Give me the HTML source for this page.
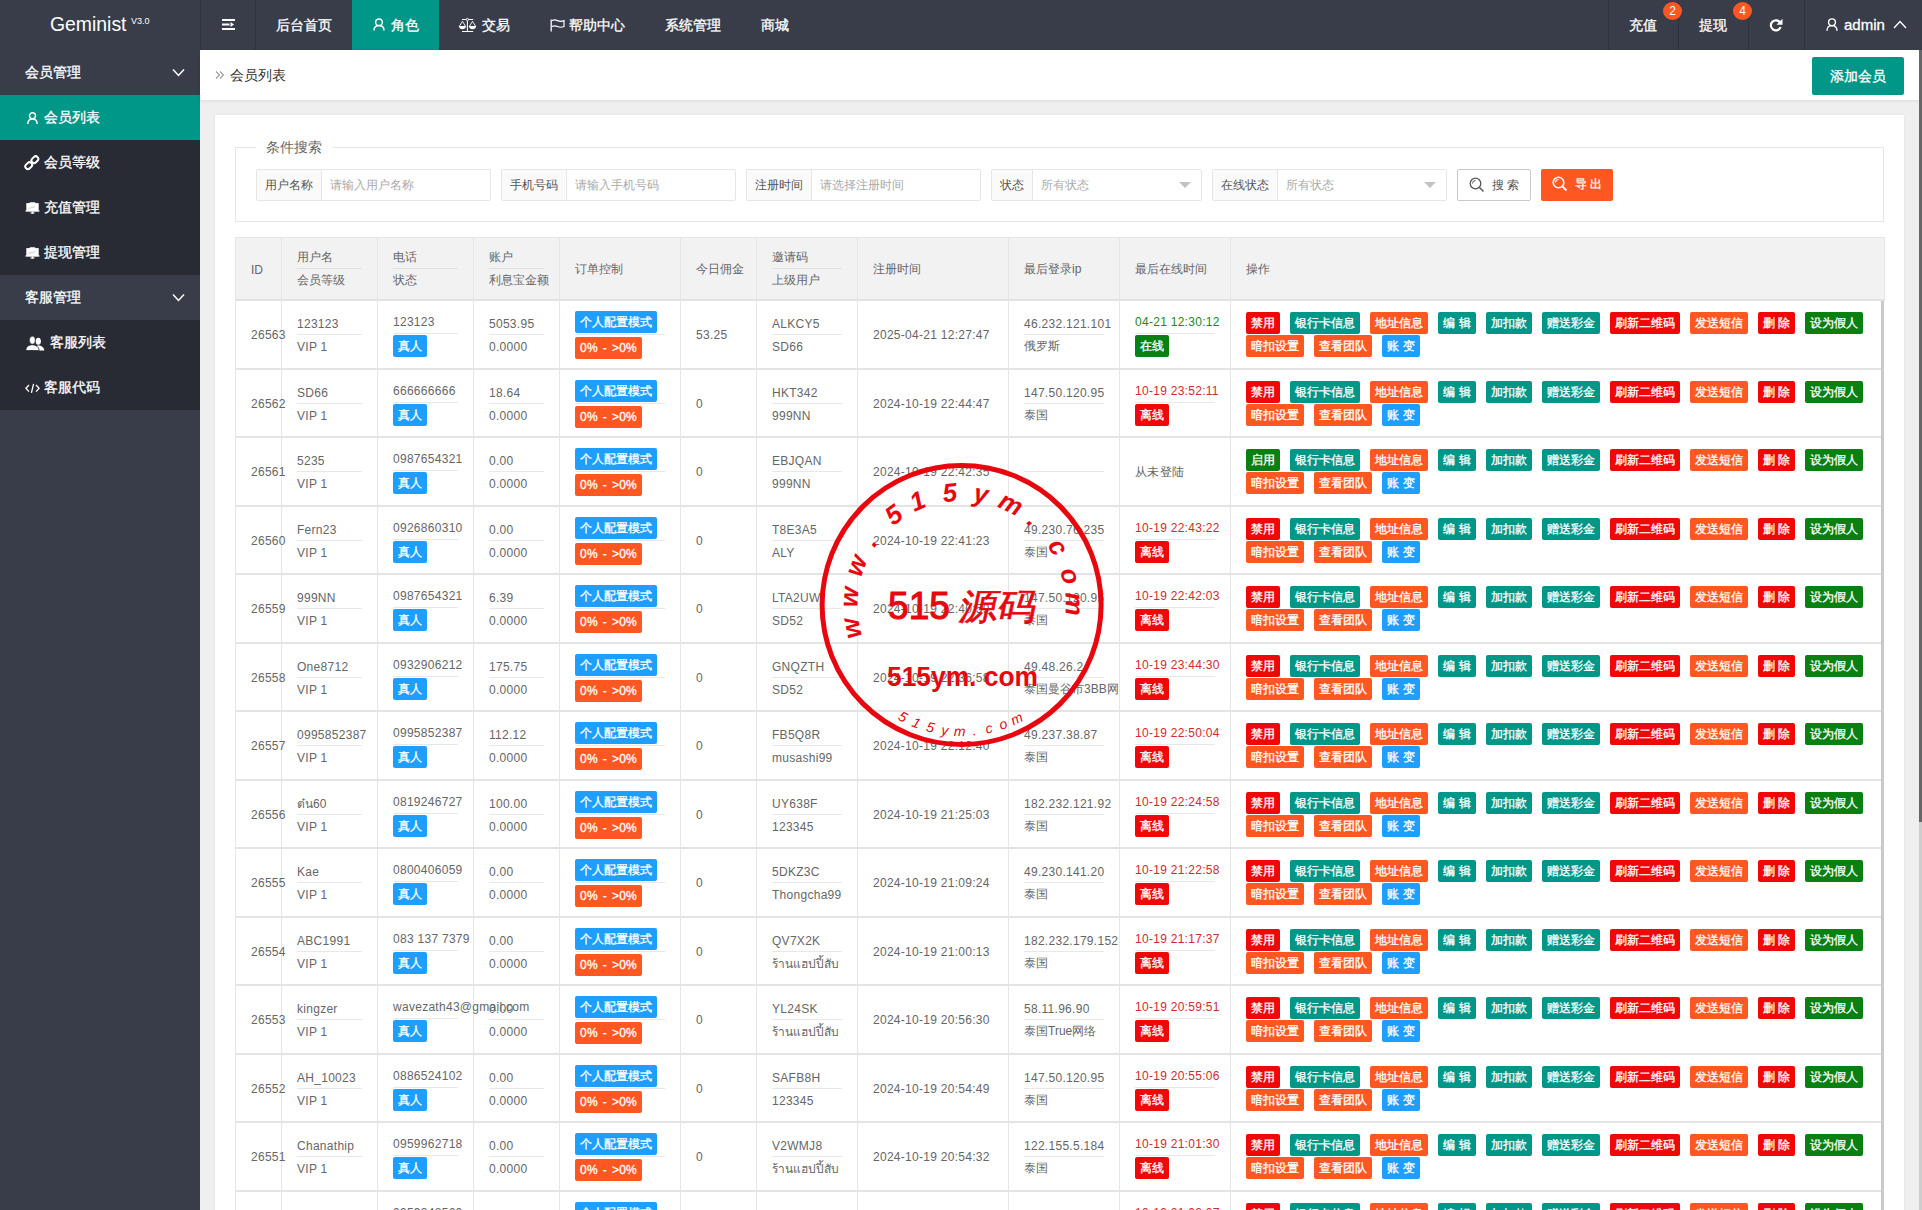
<!DOCTYPE html>
<html><head><meta charset="utf-8"><title>会员列表</title>
<style>
*{box-sizing:border-box;margin:0;padding:0}
html,body{width:1922px;height:1210px;overflow:hidden}
body{position:relative;background:#efefef;font-family:"Liberation Sans",sans-serif;color:#666;font-size:12px}
.abs{position:absolute}
#hdr{position:absolute;left:0;top:0;width:1922px;height:50px;background:#393d49;color:#fff;font-size:14px}
#logo{position:absolute;left:0;top:0;width:200px;height:50px}
#logo .t{position:absolute;left:50px;top:11px;font-size:19.4px;line-height:26px;color:#fff}
#logo .v{position:absolute;left:131px;top:15.5px;font-size:9px;line-height:10px;color:#fff}
.nv{position:absolute;top:0;height:50px;line-height:50px;color:#fff;white-space:nowrap;-webkit-text-stroke:.3px #fff}
.sep{position:absolute;top:0;width:1px;height:50px;background:#30333d}
.badge{position:absolute;width:19px;height:18px;border-radius:50%;background:#ff5722;color:#fff;font-size:12px;line-height:19px;text-align:center}
#side{position:absolute;left:0;top:50px;width:200px;height:1160px;background:#393d49}
.mi{position:absolute;left:0;width:200px;height:45px;line-height:45px;color:#fff;font-size:14px;white-space:nowrap}
.mi.grp{background:#393d49}
.mi.sub{background:#282b33}
.mi.act{background:#009688}
.mi .tx{position:absolute;top:0;-webkit-text-stroke:.3px #fff}
.mi svg{position:absolute}
#crumb{position:absolute;left:200px;top:50px;width:1719px;height:50px;background:#fff;box-shadow:0 1px 3px rgba(0,0,0,.08)}
#sb{position:absolute;left:1919px;top:50px;width:3px;height:1160px;background:#cdcdcd}
#sbt{position:absolute;left:1919px;top:50px;width:3px;height:772px;background:#666}
#card{position:absolute;left:215px;top:115px;width:1689px;height:1100px;background:#fff;box-shadow:0 0 3px rgba(0,0,0,.06)}
#fs{position:absolute;left:235px;top:147px;width:1649px;height:75px;border:1px solid #e6e6e6}
#legend{position:absolute;left:256px;top:138px;width:76px;height:18px;background:#fff;font-size:14px;line-height:18px;color:#666;text-align:center}
.ig{position:absolute;top:169px;height:32px;border:1px solid #e6e6e6;border-radius:2px;background:#fff}
.ig .lb{position:absolute;left:0;top:0;height:30px;line-height:30px;background:#fafafa;border-right:1px solid #e6e6e6;color:#555;text-align:center;font-size:12px}
.ig .ph{position:absolute;top:0;height:30px;line-height:30px;color:#aaa;font-size:12px;white-space:nowrap}
.tri{position:absolute;top:12px;width:0;height:0;border-left:6px solid transparent;border-right:6px solid transparent;border-top:6px solid #c2c2c2}
#tbl-h{position:absolute;left:235px;top:237px;width:1650px;height:64px;background:#f2f2f2;border:1px solid #e6e6e6;border-bottom:2px solid #e2e2e2}
.vl{position:absolute;top:237px;width:1px;height:973px;background:#e6e6e6}
.hc{position:absolute;font-size:12px;color:#666;white-space:nowrap}
.hc2{position:absolute;top:246px;font-size:12px;color:#666;white-space:nowrap}
.hc2 .l1{height:23px;line-height:22px;border-bottom:1px solid #e2e2e2}
.hc2 .l2{height:22px;line-height:23px}
.row{position:absolute;left:236px;width:1645px;height:68.5px;border-bottom:2px solid #e4e4e4}
.row > div{position:absolute;white-space:nowrap}
.c1{top:1px;height:66.5px;line-height:66.5px;font-size:12px;letter-spacing:.28px}
.tt{top:11px}
.tt .l1,.tb .l1{height:23px;line-height:22px;border-bottom:1px solid #e8e8e8;letter-spacing:.28px}
.n{position:relative;top:1px}
.tt .l2{height:23px;line-height:23px;letter-spacing:.28px}
.tt .l2.cj{letter-spacing:0}
.tb{top:10px}
.tb .l2{height:25px;padding-top:1px}
.bb{top:10px}
.bb .l1{height:24px;border-bottom:1px solid #e8e8e8}
.bb .l2{height:24px;padding-top:2px}
.bd{display:inline-block;height:22px;line-height:22px;color:#fff;font-size:12px;text-align:center;border-radius:2px;-webkit-text-stroke:.3px #fff}
.clip{overflow:hidden;width:95px}
.ops{left:1010px;top:11px;width:640px;height:46px}
.bt{position:absolute;height:22px;line-height:22px;color:#fff;font-size:12px;text-align:center;border-radius:2px;white-space:nowrap;-webkit-text-stroke:.3px #fff}
#tbl-r{position:absolute;left:1881px;top:301px;width:3px;height:909px;background:#c9c9c9}
</style></head><body>
<div id="hdr">
 <div id="logo"><span class="t">Geminist</span><span class="v">V3.0</span></div>
 <div class="sep" style="left:200px"></div>
 <div class="sep" style="left:255px"></div>
 <svg class="abs" style="left:222px;top:19px" width="13" height="12" viewBox="0 0 13 12"><rect x="0" y="0" width="13" height="2" fill="#fff"/><rect x="0" y="4.5" width="7.5" height="2" fill="#fff"/><path d="M8.5 3 L12 5.5 L8.5 8 Z" fill="#fff"/><rect x="0" y="9" width="13" height="2" fill="#fff"/></svg>
 <div class="nv" style="left:256px;width:96px;text-align:center">后台首页</div>
 <div class="nv" style="left:352px;width:87px;background:#009688"></div>
 <svg class="abs" style="left:373px;top:18px" width="12" height="13" viewBox="0 0 12 13"><circle cx="6" cy="4.3" r="3.4" fill="none" stroke="#fff" stroke-width="1.5"/><path d="M1 12.6 C1 9 3 7.6 6 7.6 C9 7.6 11 9 11 12.6" fill="none" stroke="#fff" stroke-width="1.5"/></svg>
 <div class="nv" style="left:391px">角色</div>
 <svg class="abs" style="left:456px;top:15px" width="24" height="20" viewBox="0 0 24 20"><path d="M6 4.5 H17.2 M11.4 5.5 V16.5 M6 16.5 H17.2" stroke="#fff" stroke-width="1.05" fill="none"/><circle cx="11.4" cy="4.5" r="1.15" fill="#393d49" stroke="#fff" stroke-width="0.9"/><path d="M6.45 6.3 L3.3 11.4 M6.45 6.3 L9.6 11.4 M16.5 6.3 L13.35 11.4 M16.5 6.3 L19.65 11.4" stroke="#fff" stroke-width="0.9" fill="none"/><path d="M3 11.1 H9.9 A3.45 3.1 0 0 1 3 11.1 Z M13 11.1 H20.1 A3.55 3.1 0 0 1 13 11.1 Z" fill="#fff"/></svg>
 <div class="nv" style="left:482px">交易</div>
 <svg class="abs" style="left:550px;top:19px" width="15" height="13" viewBox="0 0 15 13"><path d="M1.2 0.5 V12.5" stroke="#fff" stroke-width="1.3"/><path d="M2 1.5 Q4.5 0.2 7.5 1.6 Q10.5 3 14 1.6 V7.5 Q10.5 9 7.5 7.5 Q4.5 6.2 2 7.5" stroke="#fff" stroke-width="1.2" fill="none"/></svg>
 <div class="nv" style="left:569px">帮助中心</div>
 <div class="nv" style="left:665px">系统管理</div>
 <div class="nv" style="left:761px">商城</div>
 <div class="sep" style="left:1608px"></div>
 <div class="sep" style="left:1678px"></div>
 <div class="sep" style="left:1748px"></div>
 <div class="sep" style="left:1804px"></div>
 <div class="nv" style="left:1629px">充值</div>
 <div class="badge" style="left:1663px;top:2px">2</div>
 <div class="nv" style="left:1699px">提现</div>
 <div class="badge" style="left:1733px;top:2px">4</div>
 <svg class="abs" style="left:1769px;top:18px" width="14" height="14" viewBox="0 0 14 14"><path d="M11.3 5 A5 5 0 1 0 11.6 9" stroke="#fff" stroke-width="2.2" fill="none"/><path d="M13.5 0.8 V6.8 H7.5 Z" fill="#fff"/></svg>
 <svg class="abs" style="left:1826px;top:18px" width="12" height="13" viewBox="0 0 12 13"><circle cx="6" cy="4.3" r="3.4" fill="none" stroke="#fff" stroke-width="1.4"/><path d="M1 12.8 C1 9 3 7.6 6 7.6 C9 7.6 11 9 11 12.8" fill="none" stroke="#fff" stroke-width="1.4"/></svg>
 <div class="nv" style="left:1844px;font-size:15px">admin</div>
 <svg class="abs" style="left:1893px;top:20px" width="14" height="9" viewBox="0 0 14 9"><path d="M1 8 L7 1.5 L13 8" stroke="#fff" stroke-width="1.4" fill="none"/></svg>
</div>
<div id="side">
 <div class="mi grp" style="top:0"><span class="tx" style="left:25px">会员管理</span><svg style="left:172px;top:18px" width="13" height="9" viewBox="0 0 13 9"><path d="M1 1.5 L6.5 7.5 L12 1.5" stroke="#fff" stroke-width="1.5" fill="none"/></svg></div>
 <div class="mi act" style="top:45px"><svg style="left:27px;top:17px" width="11" height="12" viewBox="0 0 11 12"><circle cx="5.5" cy="3.8" r="3" fill="none" stroke="#fff" stroke-width="1.4"/><path d="M0.8 12 C0.8 8.5 2.8 7 5.5 7 C8.2 7 10.2 8.5 10.2 12" fill="none" stroke="#fff" stroke-width="1.4"/></svg><span class="tx" style="left:44px">会员列表</span></div>
 <div class="mi sub" style="top:90px"><svg style="left:24px;top:15px" width="17" height="17" viewBox="0 0 17 17"><g fill="none" stroke="#fff" stroke-width="2"><rect x="-3.7" y="-2.6" width="7.4" height="5.2" rx="2.6" transform="translate(10.9 4.7) rotate(-45)"/><rect x="-3.7" y="-2.6" width="7.4" height="5.2" rx="2.6" transform="translate(4.7 10.7) rotate(-45)"/></g></svg><span class="tx" style="left:44px">会员等级</span></div>
 <div class="mi sub" style="top:135px"><svg style="left:24.5px;top:16.5px" width="15" height="13" viewBox="0 0 15 13"><rect x="4.6" y="0.3" width="5.8" height="1.6" rx="0.7" fill="#fff"/><rect x="1.3" y="1.1" width="12.4" height="8.3" fill="#fff"/><rect x="0.25" y="8.4" width="14.5" height="1.1" rx="0.4" fill="#fff"/><rect x="6.9" y="9.4" width="1.2" height="1.8" fill="#fff"/><ellipse cx="7.5" cy="11.1" rx="2.3" ry="0.75" fill="#fff"/><path d="M3.3 6.3 L5.5 6 L7 5.1 L8.5 5.5 L10.3 3.8" stroke="#9a9a9a" stroke-width="0.5" fill="none"/></svg><span class="tx" style="left:44px">充值管理</span></div>
 <div class="mi sub" style="top:180px"><svg style="left:24.5px;top:16.5px" width="15" height="13" viewBox="0 0 15 13"><rect x="4.6" y="0.3" width="5.8" height="1.6" rx="0.7" fill="#fff"/><rect x="1.3" y="1.1" width="12.4" height="8.3" fill="#fff"/><rect x="0.25" y="8.4" width="14.5" height="1.1" rx="0.4" fill="#fff"/><rect x="6.9" y="9.4" width="1.2" height="1.8" fill="#fff"/><ellipse cx="7.5" cy="11.1" rx="2.3" ry="0.75" fill="#fff"/><path d="M3.3 6.3 L5.5 6 L7 5.1 L8.5 5.5 L10.3 3.8" stroke="#9a9a9a" stroke-width="0.5" fill="none"/></svg><span class="tx" style="left:44px">提现管理</span></div>
 <div class="mi grp" style="top:225px"><span class="tx" style="left:25px">客服管理</span><svg style="left:172px;top:18px" width="13" height="9" viewBox="0 0 13 9"><path d="M1 1.5 L6.5 7.5 L12 1.5" stroke="#fff" stroke-width="1.5" fill="none"/></svg></div>
 <div class="mi sub" style="top:270px"><svg style="left:25px;top:15.5px" width="20" height="15" viewBox="0 0 20 15"><ellipse cx="13.3" cy="5.3" rx="2.6" ry="3.5" fill="#fff"/><path d="M9.5 14.5 C9.8 10.6 11.5 9.6 13.5 9.4 C16 9.6 19 10.8 19.3 14.5 Z" fill="#fff"/><path d="M0.8 14.5 C1 10.6 3.5 9.1 7.4 8.7 C11 9.1 13.9 10.6 14.3 14.5 Z" fill="#fff" stroke="#282b33" stroke-width="0.8"/><ellipse cx="7.4" cy="4.2" rx="2.9" ry="3.9" fill="#fff" stroke="#282b33" stroke-width="0.6"/></svg><span class="tx" style="left:50px">客服列表</span></div>
 <div class="mi sub" style="top:315px"><svg style="left:24.5px;top:17.5px" width="15" height="11" viewBox="0 0 15 11"><path d="M4 2 L0.9 5.3 L4 8.6 M11 2 L14.1 5.3 L11 8.6 M8.6 0.8 L6.4 9.8" stroke="#fff" stroke-width="1.3" fill="none"/></svg><span class="tx" style="left:44px">客服代码</span></div>
</div>
<div id="crumb">
 <svg class="abs" style="left:15px;top:20px" width="10" height="10" viewBox="0 0 10 10"><path d="M1 1.5 L4.5 5 L1 8.5 M5 1.5 L8.5 5 L5 8.5" stroke="#999" stroke-width="1.1" fill="none"/></svg>
 <span class="abs" style="left:30px;top:0;line-height:50px;font-size:14px;color:#333">会员列表</span>
 <div class="abs" style="left:1612px;top:7px;width:92px;height:38px;background:#009688;border-radius:2px;color:#fff;font-size:14px;line-height:38px;text-align:center;-webkit-text-stroke:.3px #fff">添加会员</div>
</div>
<div id="sb"></div><div id="sbt"></div>
<div id="card"></div>
<div id="fs"></div>
<div id="legend">条件搜索</div>
<div class="ig" style="left:256px;width:235px"><div class="lb" style="width:65px">用户名称</div><div class="ph" style="left:73px">请输入用户名称</div></div>
<div class="ig" style="left:501px;width:235px"><div class="lb" style="width:65px">手机号码</div><div class="ph" style="left:73px">请输入手机号码</div></div>
<div class="ig" style="left:746px;width:235px"><div class="lb" style="width:65px">注册时间</div><div class="ph" style="left:73px">请选择注册时间</div></div>
<div class="ig" style="left:991px;width:211px"><div class="lb" style="width:41px">状态</div><div class="ph" style="left:49px">所有状态</div><div class="tri" style="left:187px"></div></div>
<div class="ig" style="left:1212px;width:235px"><div class="lb" style="width:65px">在线状态</div><div class="ph" style="left:73px">所有状态</div><div class="tri" style="left:211px"></div></div>
<div class="abs" style="left:1457px;top:169px;width:74px;height:32px;border:1px solid #c9c9c9;border-radius:2px;background:#fff;color:#555;font-size:12px;line-height:30px">
 <svg class="abs" style="left:11px;top:7px" width="16" height="16" viewBox="0 0 16 16"><circle cx="6.5" cy="6.5" r="5.3" stroke="#555" stroke-width="1.3" fill="none"/><path d="M10.5 10.5 L14.5 14.5" stroke="#555" stroke-width="1.5"/><path d="M3.5 6.5 A3 3 0 0 1 6.5 3.5" stroke="#555" stroke-width="1" fill="none"/></svg>
 <span class="abs" style="left:34px;top:0;letter-spacing:3px">搜索</span></div>
<div class="abs" style="left:1541px;top:169px;width:72px;height:32px;background:#ff5722;border-radius:2px;color:#fff;font-size:12px;line-height:31px;-webkit-text-stroke:.3px #fff">
 <svg class="abs" style="left:11px;top:7px" width="16" height="16" viewBox="0 0 16 16"><circle cx="6.5" cy="6.5" r="5.3" stroke="#fff" stroke-width="1.6" fill="none"/><path d="M10.5 10.5 L14.5 14.5" stroke="#fff" stroke-width="1.8"/><path d="M3.5 6.5 A3 3 0 0 1 6.5 3.5" stroke="#fff" stroke-width="1.2" fill="none"/></svg>
 <span class="abs" style="left:34px;top:0;letter-spacing:3px">导出</span></div>
<div id="tbl-h"></div>
<div class="vl" style="left:235px"></div><div class="vl" style="left:281px"></div><div class="vl" style="left:377px"></div><div class="vl" style="left:473px"></div><div class="vl" style="left:559px"></div><div class="vl" style="left:680px"></div><div class="vl" style="left:756px"></div><div class="vl" style="left:857px"></div><div class="vl" style="left:1008px"></div><div class="vl" style="left:1119px"></div><div class="vl" style="left:1230px"></div>
<div class="hc" style="left:251px;top:238px;line-height:64px">ID</div>
<div class="hc2" style="left:297px;width:65px"><div class="l1">用户名</div><div class="l2">会员等级</div></div>
<div class="hc2" style="left:393px;width:65px"><div class="l1">电话</div><div class="l2">状态</div></div>
<div class="hc2" style="left:489px;width:55px"><div class="l1">账户</div><div class="l2">利息宝金额</div></div>
<div class="hc" style="left:575px;top:237px;line-height:64px">订单控制</div>
<div class="hc" style="left:696px;top:237px;line-height:64px">今日佣金</div>
<div class="hc2" style="left:772px;width:70px"><div class="l1">邀请码</div><div class="l2">上级用户</div></div>
<div class="hc" style="left:873px;top:237px;line-height:64px">注册时间</div>
<div class="hc" style="left:1024px;top:237px;line-height:64px">最后登录ip</div>
<div class="hc" style="left:1135px;top:237px;line-height:64px">最后在线时间</div>
<div class="hc" style="left:1246px;top:237px;line-height:64px">操作</div>
<div class="row" style="top:301.0px"><div class="c1" style="left:15px">26563</div><div class="tt" style="left:61px;width:65px"><div class="l1"><span class="n">123123</span></div><div class="l2"><span class="n">VIP 1</span></div></div><div class="tb" style="left:157px;width:65px"><div class="l1">123123</div><div class="l2"><span class="bd" style="background:#1e9fff;width:34px">真人</span></div></div><div class="tt" style="left:253px;width:55px"><div class="l1"><span class="n">5053.95</span></div><div class="l2"><span class="n">0.0000</span></div></div><div class="bb" style="left:339px;width:90px"><div class="l1"><span class="bd" style="background:#1e9fff;width:82px">个人配置模式</span></div><div class="l2"><span class="bd" style="background:#ff5722;width:67px;word-spacing:1.5px;letter-spacing:.2px">0% - &gt;0%</span></div></div><div class="c1" style="left:460px">53.25</div><div class="tt" style="left:536px;width:70px"><div class="l1"><span class="n">ALKCY5</span></div><div class="l2"><span class="n">SD66</span></div></div><div class="c1" style="left:637px">2025-04-21 12:27:47</div><div class="tt" style="left:788px;width:80px"><div class="l1"><span class="n">46.232.121.101</span></div><div class="l2 clip cj">俄罗斯</div></div><div class="tb" style="left:899px;width:80px"><div class="l1" style="color:#1a8a1a">04-21 12:30:12</div><div class="l2"><span class="bd" style="background:#0a7f12;width:34px">在线</span></div></div><div class="ops"><span class="bt" style="left:0px;top:0;width:34px;background:#f00808">禁用</span><span class="bt" style="left:44px;top:0;width:70px;background:#009688">银行卡信息</span><span class="bt" style="left:124px;top:0;width:58px;background:#ff5722">地址信息</span><span class="bt" style="left:192px;top:0;width:38px;background:#009688">编 辑</span><span class="bt" style="left:240px;top:0;width:46px;background:#009688">加扣款</span><span class="bt" style="left:296px;top:0;width:58px;background:#009688">赠送彩金</span><span class="bt" style="left:364px;top:0;width:70px;background:#f00808">刷新二维码</span><span class="bt" style="left:444px;top:0;width:58px;background:#ff5722">发送短信</span><span class="bt" style="left:512px;top:0;width:37px;background:#f00808">删 除</span><span class="bt" style="left:559px;top:0;width:58px;background:#0a7f12">设为假人</span><span class="bt" style="left:0px;top:23px;width:58px;background:#ff5722">暗扣设置</span><span class="bt" style="left:68px;top:23px;width:58px;background:#ff5722">查看团队</span><span class="bt" style="left:136px;top:23px;width:38px;background:#1e9fff">账 变</span></div></div><div class="row" style="top:369.5px"><div class="c1" style="left:15px">26562</div><div class="tt" style="left:61px;width:65px"><div class="l1"><span class="n">SD66</span></div><div class="l2"><span class="n">VIP 1</span></div></div><div class="tb" style="left:157px;width:65px"><div class="l1">666666666</div><div class="l2"><span class="bd" style="background:#1e9fff;width:34px">真人</span></div></div><div class="tt" style="left:253px;width:55px"><div class="l1"><span class="n">18.64</span></div><div class="l2"><span class="n">0.0000</span></div></div><div class="bb" style="left:339px;width:90px"><div class="l1"><span class="bd" style="background:#1e9fff;width:82px">个人配置模式</span></div><div class="l2"><span class="bd" style="background:#ff5722;width:67px;word-spacing:1.5px;letter-spacing:.2px">0% - &gt;0%</span></div></div><div class="c1" style="left:460px">0</div><div class="tt" style="left:536px;width:70px"><div class="l1"><span class="n">HKT342</span></div><div class="l2"><span class="n">999NN</span></div></div><div class="c1" style="left:637px">2024-10-19 22:44:47</div><div class="tt" style="left:788px;width:80px"><div class="l1"><span class="n">147.50.120.95</span></div><div class="l2 clip cj">泰国</div></div><div class="tb" style="left:899px;width:80px"><div class="l1" style="color:#d42a2a">10-19 23:52:11</div><div class="l2"><span class="bd" style="background:#f00808;width:34px">离线</span></div></div><div class="ops"><span class="bt" style="left:0px;top:0;width:34px;background:#f00808">禁用</span><span class="bt" style="left:44px;top:0;width:70px;background:#009688">银行卡信息</span><span class="bt" style="left:124px;top:0;width:58px;background:#ff5722">地址信息</span><span class="bt" style="left:192px;top:0;width:38px;background:#009688">编 辑</span><span class="bt" style="left:240px;top:0;width:46px;background:#009688">加扣款</span><span class="bt" style="left:296px;top:0;width:58px;background:#009688">赠送彩金</span><span class="bt" style="left:364px;top:0;width:70px;background:#f00808">刷新二维码</span><span class="bt" style="left:444px;top:0;width:58px;background:#ff5722">发送短信</span><span class="bt" style="left:512px;top:0;width:37px;background:#f00808">删 除</span><span class="bt" style="left:559px;top:0;width:58px;background:#0a7f12">设为假人</span><span class="bt" style="left:0px;top:23px;width:58px;background:#ff5722">暗扣设置</span><span class="bt" style="left:68px;top:23px;width:58px;background:#ff5722">查看团队</span><span class="bt" style="left:136px;top:23px;width:38px;background:#1e9fff">账 变</span></div></div><div class="row" style="top:438.0px"><div class="c1" style="left:15px">26561</div><div class="tt" style="left:61px;width:65px"><div class="l1"><span class="n">5235</span></div><div class="l2"><span class="n">VIP 1</span></div></div><div class="tb" style="left:157px;width:65px"><div class="l1">0987654321</div><div class="l2"><span class="bd" style="background:#1e9fff;width:34px">真人</span></div></div><div class="tt" style="left:253px;width:55px"><div class="l1"><span class="n">0.00</span></div><div class="l2"><span class="n">0.0000</span></div></div><div class="bb" style="left:339px;width:90px"><div class="l1"><span class="bd" style="background:#1e9fff;width:82px">个人配置模式</span></div><div class="l2"><span class="bd" style="background:#ff5722;width:67px;word-spacing:1.5px;letter-spacing:.2px">0% - &gt;0%</span></div></div><div class="c1" style="left:460px">0</div><div class="tt" style="left:536px;width:70px"><div class="l1"><span class="n">EBJQAN</span></div><div class="l2"><span class="n">999NN</span></div></div><div class="c1" style="left:637px">2024-10-19 22:42:35</div><div class="tt" style="left:788px;width:80px"><div class="l1"><span class="n"></span></div><div class="l2 clip cj"></div></div><div class="c1" style="left:899px">从未登陆</div><div class="ops"><span class="bt" style="left:0px;top:0;width:34px;background:#0a7f12">启用</span><span class="bt" style="left:44px;top:0;width:70px;background:#009688">银行卡信息</span><span class="bt" style="left:124px;top:0;width:58px;background:#ff5722">地址信息</span><span class="bt" style="left:192px;top:0;width:38px;background:#009688">编 辑</span><span class="bt" style="left:240px;top:0;width:46px;background:#009688">加扣款</span><span class="bt" style="left:296px;top:0;width:58px;background:#009688">赠送彩金</span><span class="bt" style="left:364px;top:0;width:70px;background:#f00808">刷新二维码</span><span class="bt" style="left:444px;top:0;width:58px;background:#ff5722">发送短信</span><span class="bt" style="left:512px;top:0;width:37px;background:#f00808">删 除</span><span class="bt" style="left:559px;top:0;width:58px;background:#0a7f12">设为假人</span><span class="bt" style="left:0px;top:23px;width:58px;background:#ff5722">暗扣设置</span><span class="bt" style="left:68px;top:23px;width:58px;background:#ff5722">查看团队</span><span class="bt" style="left:136px;top:23px;width:38px;background:#1e9fff">账 变</span></div></div><div class="row" style="top:506.5px"><div class="c1" style="left:15px">26560</div><div class="tt" style="left:61px;width:65px"><div class="l1"><span class="n">Fern23</span></div><div class="l2"><span class="n">VIP 1</span></div></div><div class="tb" style="left:157px;width:65px"><div class="l1">0926860310</div><div class="l2"><span class="bd" style="background:#1e9fff;width:34px">真人</span></div></div><div class="tt" style="left:253px;width:55px"><div class="l1"><span class="n">0.00</span></div><div class="l2"><span class="n">0.0000</span></div></div><div class="bb" style="left:339px;width:90px"><div class="l1"><span class="bd" style="background:#1e9fff;width:82px">个人配置模式</span></div><div class="l2"><span class="bd" style="background:#ff5722;width:67px;word-spacing:1.5px;letter-spacing:.2px">0% - &gt;0%</span></div></div><div class="c1" style="left:460px">0</div><div class="tt" style="left:536px;width:70px"><div class="l1"><span class="n">T8E3A5</span></div><div class="l2"><span class="n">ALY</span></div></div><div class="c1" style="left:637px">2024-10-19 22:41:23</div><div class="tt" style="left:788px;width:80px"><div class="l1"><span class="n">49.230.76.235</span></div><div class="l2 clip cj">泰国</div></div><div class="tb" style="left:899px;width:80px"><div class="l1" style="color:#d42a2a">10-19 22:43:22</div><div class="l2"><span class="bd" style="background:#f00808;width:34px">离线</span></div></div><div class="ops"><span class="bt" style="left:0px;top:0;width:34px;background:#f00808">禁用</span><span class="bt" style="left:44px;top:0;width:70px;background:#009688">银行卡信息</span><span class="bt" style="left:124px;top:0;width:58px;background:#ff5722">地址信息</span><span class="bt" style="left:192px;top:0;width:38px;background:#009688">编 辑</span><span class="bt" style="left:240px;top:0;width:46px;background:#009688">加扣款</span><span class="bt" style="left:296px;top:0;width:58px;background:#009688">赠送彩金</span><span class="bt" style="left:364px;top:0;width:70px;background:#f00808">刷新二维码</span><span class="bt" style="left:444px;top:0;width:58px;background:#ff5722">发送短信</span><span class="bt" style="left:512px;top:0;width:37px;background:#f00808">删 除</span><span class="bt" style="left:559px;top:0;width:58px;background:#0a7f12">设为假人</span><span class="bt" style="left:0px;top:23px;width:58px;background:#ff5722">暗扣设置</span><span class="bt" style="left:68px;top:23px;width:58px;background:#ff5722">查看团队</span><span class="bt" style="left:136px;top:23px;width:38px;background:#1e9fff">账 变</span></div></div><div class="row" style="top:575.0px"><div class="c1" style="left:15px">26559</div><div class="tt" style="left:61px;width:65px"><div class="l1"><span class="n">999NN</span></div><div class="l2"><span class="n">VIP 1</span></div></div><div class="tb" style="left:157px;width:65px"><div class="l1">0987654321</div><div class="l2"><span class="bd" style="background:#1e9fff;width:34px">真人</span></div></div><div class="tt" style="left:253px;width:55px"><div class="l1"><span class="n">6.39</span></div><div class="l2"><span class="n">0.0000</span></div></div><div class="bb" style="left:339px;width:90px"><div class="l1"><span class="bd" style="background:#1e9fff;width:82px">个人配置模式</span></div><div class="l2"><span class="bd" style="background:#ff5722;width:67px;word-spacing:1.5px;letter-spacing:.2px">0% - &gt;0%</span></div></div><div class="c1" style="left:460px">0</div><div class="tt" style="left:536px;width:70px"><div class="l1"><span class="n">LTA2UW</span></div><div class="l2"><span class="n">SD52</span></div></div><div class="c1" style="left:637px">2024-10-19 22:40:59</div><div class="tt" style="left:788px;width:80px"><div class="l1"><span class="n">147.50.120.95</span></div><div class="l2 clip cj">泰国</div></div><div class="tb" style="left:899px;width:80px"><div class="l1" style="color:#d42a2a">10-19 22:42:03</div><div class="l2"><span class="bd" style="background:#f00808;width:34px">离线</span></div></div><div class="ops"><span class="bt" style="left:0px;top:0;width:34px;background:#f00808">禁用</span><span class="bt" style="left:44px;top:0;width:70px;background:#009688">银行卡信息</span><span class="bt" style="left:124px;top:0;width:58px;background:#ff5722">地址信息</span><span class="bt" style="left:192px;top:0;width:38px;background:#009688">编 辑</span><span class="bt" style="left:240px;top:0;width:46px;background:#009688">加扣款</span><span class="bt" style="left:296px;top:0;width:58px;background:#009688">赠送彩金</span><span class="bt" style="left:364px;top:0;width:70px;background:#f00808">刷新二维码</span><span class="bt" style="left:444px;top:0;width:58px;background:#ff5722">发送短信</span><span class="bt" style="left:512px;top:0;width:37px;background:#f00808">删 除</span><span class="bt" style="left:559px;top:0;width:58px;background:#0a7f12">设为假人</span><span class="bt" style="left:0px;top:23px;width:58px;background:#ff5722">暗扣设置</span><span class="bt" style="left:68px;top:23px;width:58px;background:#ff5722">查看团队</span><span class="bt" style="left:136px;top:23px;width:38px;background:#1e9fff">账 变</span></div></div><div class="row" style="top:643.5px"><div class="c1" style="left:15px">26558</div><div class="tt" style="left:61px;width:65px"><div class="l1"><span class="n">One8712</span></div><div class="l2"><span class="n">VIP 1</span></div></div><div class="tb" style="left:157px;width:65px"><div class="l1">0932906212</div><div class="l2"><span class="bd" style="background:#1e9fff;width:34px">真人</span></div></div><div class="tt" style="left:253px;width:55px"><div class="l1"><span class="n">175.75</span></div><div class="l2"><span class="n">0.0000</span></div></div><div class="bb" style="left:339px;width:90px"><div class="l1"><span class="bd" style="background:#1e9fff;width:82px">个人配置模式</span></div><div class="l2"><span class="bd" style="background:#ff5722;width:67px;word-spacing:1.5px;letter-spacing:.2px">0% - &gt;0%</span></div></div><div class="c1" style="left:460px">0</div><div class="tt" style="left:536px;width:70px"><div class="l1"><span class="n">GNQZTH</span></div><div class="l2"><span class="n">SD52</span></div></div><div class="c1" style="left:637px">2024-10-19 22:36:58</div><div class="tt" style="left:788px;width:80px"><div class="l1"><span class="n">49.48.26.2</span></div><div class="l2 clip cj">泰国曼谷市3BB网络</div></div><div class="tb" style="left:899px;width:80px"><div class="l1" style="color:#d42a2a">10-19 23:44:30</div><div class="l2"><span class="bd" style="background:#f00808;width:34px">离线</span></div></div><div class="ops"><span class="bt" style="left:0px;top:0;width:34px;background:#f00808">禁用</span><span class="bt" style="left:44px;top:0;width:70px;background:#009688">银行卡信息</span><span class="bt" style="left:124px;top:0;width:58px;background:#ff5722">地址信息</span><span class="bt" style="left:192px;top:0;width:38px;background:#009688">编 辑</span><span class="bt" style="left:240px;top:0;width:46px;background:#009688">加扣款</span><span class="bt" style="left:296px;top:0;width:58px;background:#009688">赠送彩金</span><span class="bt" style="left:364px;top:0;width:70px;background:#f00808">刷新二维码</span><span class="bt" style="left:444px;top:0;width:58px;background:#ff5722">发送短信</span><span class="bt" style="left:512px;top:0;width:37px;background:#f00808">删 除</span><span class="bt" style="left:559px;top:0;width:58px;background:#0a7f12">设为假人</span><span class="bt" style="left:0px;top:23px;width:58px;background:#ff5722">暗扣设置</span><span class="bt" style="left:68px;top:23px;width:58px;background:#ff5722">查看团队</span><span class="bt" style="left:136px;top:23px;width:38px;background:#1e9fff">账 变</span></div></div><div class="row" style="top:712.0px"><div class="c1" style="left:15px">26557</div><div class="tt" style="left:61px;width:65px"><div class="l1"><span class="n">0995852387</span></div><div class="l2"><span class="n">VIP 1</span></div></div><div class="tb" style="left:157px;width:65px"><div class="l1">0995852387</div><div class="l2"><span class="bd" style="background:#1e9fff;width:34px">真人</span></div></div><div class="tt" style="left:253px;width:55px"><div class="l1"><span class="n">112.12</span></div><div class="l2"><span class="n">0.0000</span></div></div><div class="bb" style="left:339px;width:90px"><div class="l1"><span class="bd" style="background:#1e9fff;width:82px">个人配置模式</span></div><div class="l2"><span class="bd" style="background:#ff5722;width:67px;word-spacing:1.5px;letter-spacing:.2px">0% - &gt;0%</span></div></div><div class="c1" style="left:460px">0</div><div class="tt" style="left:536px;width:70px"><div class="l1"><span class="n">FB5Q8R</span></div><div class="l2"><span class="n">musashi99</span></div></div><div class="c1" style="left:637px">2024-10-19 22:12:40</div><div class="tt" style="left:788px;width:80px"><div class="l1"><span class="n">49.237.38.87</span></div><div class="l2 clip cj">泰国</div></div><div class="tb" style="left:899px;width:80px"><div class="l1" style="color:#d42a2a">10-19 22:50:04</div><div class="l2"><span class="bd" style="background:#f00808;width:34px">离线</span></div></div><div class="ops"><span class="bt" style="left:0px;top:0;width:34px;background:#f00808">禁用</span><span class="bt" style="left:44px;top:0;width:70px;background:#009688">银行卡信息</span><span class="bt" style="left:124px;top:0;width:58px;background:#ff5722">地址信息</span><span class="bt" style="left:192px;top:0;width:38px;background:#009688">编 辑</span><span class="bt" style="left:240px;top:0;width:46px;background:#009688">加扣款</span><span class="bt" style="left:296px;top:0;width:58px;background:#009688">赠送彩金</span><span class="bt" style="left:364px;top:0;width:70px;background:#f00808">刷新二维码</span><span class="bt" style="left:444px;top:0;width:58px;background:#ff5722">发送短信</span><span class="bt" style="left:512px;top:0;width:37px;background:#f00808">删 除</span><span class="bt" style="left:559px;top:0;width:58px;background:#0a7f12">设为假人</span><span class="bt" style="left:0px;top:23px;width:58px;background:#ff5722">暗扣设置</span><span class="bt" style="left:68px;top:23px;width:58px;background:#ff5722">查看团队</span><span class="bt" style="left:136px;top:23px;width:38px;background:#1e9fff">账 变</span></div></div><div class="row" style="top:780.5px"><div class="c1" style="left:15px">26556</div><div class="tt" style="left:61px;width:65px"><div class="l1" style="letter-spacing:0"><span class="n">ต๋น60</span></div><div class="l2"><span class="n">VIP 1</span></div></div><div class="tb" style="left:157px;width:65px"><div class="l1">0819246727</div><div class="l2"><span class="bd" style="background:#1e9fff;width:34px">真人</span></div></div><div class="tt" style="left:253px;width:55px"><div class="l1"><span class="n">100.00</span></div><div class="l2"><span class="n">0.0000</span></div></div><div class="bb" style="left:339px;width:90px"><div class="l1"><span class="bd" style="background:#1e9fff;width:82px">个人配置模式</span></div><div class="l2"><span class="bd" style="background:#ff5722;width:67px;word-spacing:1.5px;letter-spacing:.2px">0% - &gt;0%</span></div></div><div class="c1" style="left:460px">0</div><div class="tt" style="left:536px;width:70px"><div class="l1"><span class="n">UY638F</span></div><div class="l2"><span class="n">123345</span></div></div><div class="c1" style="left:637px">2024-10-19 21:25:03</div><div class="tt" style="left:788px;width:80px"><div class="l1"><span class="n">182.232.121.92</span></div><div class="l2 clip cj">泰国</div></div><div class="tb" style="left:899px;width:80px"><div class="l1" style="color:#d42a2a">10-19 22:24:58</div><div class="l2"><span class="bd" style="background:#f00808;width:34px">离线</span></div></div><div class="ops"><span class="bt" style="left:0px;top:0;width:34px;background:#f00808">禁用</span><span class="bt" style="left:44px;top:0;width:70px;background:#009688">银行卡信息</span><span class="bt" style="left:124px;top:0;width:58px;background:#ff5722">地址信息</span><span class="bt" style="left:192px;top:0;width:38px;background:#009688">编 辑</span><span class="bt" style="left:240px;top:0;width:46px;background:#009688">加扣款</span><span class="bt" style="left:296px;top:0;width:58px;background:#009688">赠送彩金</span><span class="bt" style="left:364px;top:0;width:70px;background:#f00808">刷新二维码</span><span class="bt" style="left:444px;top:0;width:58px;background:#ff5722">发送短信</span><span class="bt" style="left:512px;top:0;width:37px;background:#f00808">删 除</span><span class="bt" style="left:559px;top:0;width:58px;background:#0a7f12">设为假人</span><span class="bt" style="left:0px;top:23px;width:58px;background:#ff5722">暗扣设置</span><span class="bt" style="left:68px;top:23px;width:58px;background:#ff5722">查看团队</span><span class="bt" style="left:136px;top:23px;width:38px;background:#1e9fff">账 变</span></div></div><div class="row" style="top:849.0px"><div class="c1" style="left:15px">26555</div><div class="tt" style="left:61px;width:65px"><div class="l1"><span class="n">Kae</span></div><div class="l2"><span class="n">VIP 1</span></div></div><div class="tb" style="left:157px;width:65px"><div class="l1">0800406059</div><div class="l2"><span class="bd" style="background:#1e9fff;width:34px">真人</span></div></div><div class="tt" style="left:253px;width:55px"><div class="l1"><span class="n">0.00</span></div><div class="l2"><span class="n">0.0000</span></div></div><div class="bb" style="left:339px;width:90px"><div class="l1"><span class="bd" style="background:#1e9fff;width:82px">个人配置模式</span></div><div class="l2"><span class="bd" style="background:#ff5722;width:67px;word-spacing:1.5px;letter-spacing:.2px">0% - &gt;0%</span></div></div><div class="c1" style="left:460px">0</div><div class="tt" style="left:536px;width:70px"><div class="l1"><span class="n">5DKZ3C</span></div><div class="l2"><span class="n">Thongcha99</span></div></div><div class="c1" style="left:637px">2024-10-19 21:09:24</div><div class="tt" style="left:788px;width:80px"><div class="l1"><span class="n">49.230.141.20</span></div><div class="l2 clip cj">泰国</div></div><div class="tb" style="left:899px;width:80px"><div class="l1" style="color:#d42a2a">10-19 21:22:58</div><div class="l2"><span class="bd" style="background:#f00808;width:34px">离线</span></div></div><div class="ops"><span class="bt" style="left:0px;top:0;width:34px;background:#f00808">禁用</span><span class="bt" style="left:44px;top:0;width:70px;background:#009688">银行卡信息</span><span class="bt" style="left:124px;top:0;width:58px;background:#ff5722">地址信息</span><span class="bt" style="left:192px;top:0;width:38px;background:#009688">编 辑</span><span class="bt" style="left:240px;top:0;width:46px;background:#009688">加扣款</span><span class="bt" style="left:296px;top:0;width:58px;background:#009688">赠送彩金</span><span class="bt" style="left:364px;top:0;width:70px;background:#f00808">刷新二维码</span><span class="bt" style="left:444px;top:0;width:58px;background:#ff5722">发送短信</span><span class="bt" style="left:512px;top:0;width:37px;background:#f00808">删 除</span><span class="bt" style="left:559px;top:0;width:58px;background:#0a7f12">设为假人</span><span class="bt" style="left:0px;top:23px;width:58px;background:#ff5722">暗扣设置</span><span class="bt" style="left:68px;top:23px;width:58px;background:#ff5722">查看团队</span><span class="bt" style="left:136px;top:23px;width:38px;background:#1e9fff">账 变</span></div></div><div class="row" style="top:917.5px"><div class="c1" style="left:15px">26554</div><div class="tt" style="left:61px;width:65px"><div class="l1"><span class="n">ABC1991</span></div><div class="l2"><span class="n">VIP 1</span></div></div><div class="tb" style="left:157px;width:65px"><div class="l1">083 137 7379</div><div class="l2"><span class="bd" style="background:#1e9fff;width:34px">真人</span></div></div><div class="tt" style="left:253px;width:55px"><div class="l1"><span class="n">0.00</span></div><div class="l2"><span class="n">0.0000</span></div></div><div class="bb" style="left:339px;width:90px"><div class="l1"><span class="bd" style="background:#1e9fff;width:82px">个人配置模式</span></div><div class="l2"><span class="bd" style="background:#ff5722;width:67px;word-spacing:1.5px;letter-spacing:.2px">0% - &gt;0%</span></div></div><div class="c1" style="left:460px">0</div><div class="tt" style="left:536px;width:70px"><div class="l1"><span class="n">QV7X2K</span></div><div class="l2 cj"><span class="n">ร้านแฮปปี้สับ</span></div></div><div class="c1" style="left:637px">2024-10-19 21:00:13</div><div class="tt" style="left:788px;width:80px"><div class="l1"><span class="n">182.232.179.152</span></div><div class="l2 clip cj">泰国</div></div><div class="tb" style="left:899px;width:80px"><div class="l1" style="color:#d42a2a">10-19 21:17:37</div><div class="l2"><span class="bd" style="background:#f00808;width:34px">离线</span></div></div><div class="ops"><span class="bt" style="left:0px;top:0;width:34px;background:#f00808">禁用</span><span class="bt" style="left:44px;top:0;width:70px;background:#009688">银行卡信息</span><span class="bt" style="left:124px;top:0;width:58px;background:#ff5722">地址信息</span><span class="bt" style="left:192px;top:0;width:38px;background:#009688">编 辑</span><span class="bt" style="left:240px;top:0;width:46px;background:#009688">加扣款</span><span class="bt" style="left:296px;top:0;width:58px;background:#009688">赠送彩金</span><span class="bt" style="left:364px;top:0;width:70px;background:#f00808">刷新二维码</span><span class="bt" style="left:444px;top:0;width:58px;background:#ff5722">发送短信</span><span class="bt" style="left:512px;top:0;width:37px;background:#f00808">删 除</span><span class="bt" style="left:559px;top:0;width:58px;background:#0a7f12">设为假人</span><span class="bt" style="left:0px;top:23px;width:58px;background:#ff5722">暗扣设置</span><span class="bt" style="left:68px;top:23px;width:58px;background:#ff5722">查看团队</span><span class="bt" style="left:136px;top:23px;width:38px;background:#1e9fff">账 变</span></div></div><div class="row" style="top:986.0px"><div class="c1" style="left:15px">26553</div><div class="tt" style="left:61px;width:65px"><div class="l1"><span class="n">kingzer</span></div><div class="l2"><span class="n">VIP 1</span></div></div><div class="tb" style="left:157px;width:65px"><div class="l1">wavezath43@gmail.com</div><div class="l2"><span class="bd" style="background:#1e9fff;width:34px">真人</span></div></div><div class="tt" style="left:253px;width:55px"><div class="l1"><span class="n">0.00</span></div><div class="l2"><span class="n">0.0000</span></div></div><div class="bb" style="left:339px;width:90px"><div class="l1"><span class="bd" style="background:#1e9fff;width:82px">个人配置模式</span></div><div class="l2"><span class="bd" style="background:#ff5722;width:67px;word-spacing:1.5px;letter-spacing:.2px">0% - &gt;0%</span></div></div><div class="c1" style="left:460px">0</div><div class="tt" style="left:536px;width:70px"><div class="l1"><span class="n">YL24SK</span></div><div class="l2 cj"><span class="n">ร้านแฮปปี้สับ</span></div></div><div class="c1" style="left:637px">2024-10-19 20:56:30</div><div class="tt" style="left:788px;width:80px"><div class="l1"><span class="n">58.11.96.90</span></div><div class="l2 clip cj">泰国True网络</div></div><div class="tb" style="left:899px;width:80px"><div class="l1" style="color:#d42a2a">10-19 20:59:51</div><div class="l2"><span class="bd" style="background:#f00808;width:34px">离线</span></div></div><div class="ops"><span class="bt" style="left:0px;top:0;width:34px;background:#f00808">禁用</span><span class="bt" style="left:44px;top:0;width:70px;background:#009688">银行卡信息</span><span class="bt" style="left:124px;top:0;width:58px;background:#ff5722">地址信息</span><span class="bt" style="left:192px;top:0;width:38px;background:#009688">编 辑</span><span class="bt" style="left:240px;top:0;width:46px;background:#009688">加扣款</span><span class="bt" style="left:296px;top:0;width:58px;background:#009688">赠送彩金</span><span class="bt" style="left:364px;top:0;width:70px;background:#f00808">刷新二维码</span><span class="bt" style="left:444px;top:0;width:58px;background:#ff5722">发送短信</span><span class="bt" style="left:512px;top:0;width:37px;background:#f00808">删 除</span><span class="bt" style="left:559px;top:0;width:58px;background:#0a7f12">设为假人</span><span class="bt" style="left:0px;top:23px;width:58px;background:#ff5722">暗扣设置</span><span class="bt" style="left:68px;top:23px;width:58px;background:#ff5722">查看团队</span><span class="bt" style="left:136px;top:23px;width:38px;background:#1e9fff">账 变</span></div></div><div class="row" style="top:1054.5px"><div class="c1" style="left:15px">26552</div><div class="tt" style="left:61px;width:65px"><div class="l1"><span class="n">AH_10023</span></div><div class="l2"><span class="n">VIP 1</span></div></div><div class="tb" style="left:157px;width:65px"><div class="l1">0886524102</div><div class="l2"><span class="bd" style="background:#1e9fff;width:34px">真人</span></div></div><div class="tt" style="left:253px;width:55px"><div class="l1"><span class="n">0.00</span></div><div class="l2"><span class="n">0.0000</span></div></div><div class="bb" style="left:339px;width:90px"><div class="l1"><span class="bd" style="background:#1e9fff;width:82px">个人配置模式</span></div><div class="l2"><span class="bd" style="background:#ff5722;width:67px;word-spacing:1.5px;letter-spacing:.2px">0% - &gt;0%</span></div></div><div class="c1" style="left:460px">0</div><div class="tt" style="left:536px;width:70px"><div class="l1"><span class="n">SAFB8H</span></div><div class="l2"><span class="n">123345</span></div></div><div class="c1" style="left:637px">2024-10-19 20:54:49</div><div class="tt" style="left:788px;width:80px"><div class="l1"><span class="n">147.50.120.95</span></div><div class="l2 clip cj">泰国</div></div><div class="tb" style="left:899px;width:80px"><div class="l1" style="color:#d42a2a">10-19 20:55:06</div><div class="l2"><span class="bd" style="background:#f00808;width:34px">离线</span></div></div><div class="ops"><span class="bt" style="left:0px;top:0;width:34px;background:#f00808">禁用</span><span class="bt" style="left:44px;top:0;width:70px;background:#009688">银行卡信息</span><span class="bt" style="left:124px;top:0;width:58px;background:#ff5722">地址信息</span><span class="bt" style="left:192px;top:0;width:38px;background:#009688">编 辑</span><span class="bt" style="left:240px;top:0;width:46px;background:#009688">加扣款</span><span class="bt" style="left:296px;top:0;width:58px;background:#009688">赠送彩金</span><span class="bt" style="left:364px;top:0;width:70px;background:#f00808">刷新二维码</span><span class="bt" style="left:444px;top:0;width:58px;background:#ff5722">发送短信</span><span class="bt" style="left:512px;top:0;width:37px;background:#f00808">删 除</span><span class="bt" style="left:559px;top:0;width:58px;background:#0a7f12">设为假人</span><span class="bt" style="left:0px;top:23px;width:58px;background:#ff5722">暗扣设置</span><span class="bt" style="left:68px;top:23px;width:58px;background:#ff5722">查看团队</span><span class="bt" style="left:136px;top:23px;width:38px;background:#1e9fff">账 变</span></div></div><div class="row" style="top:1123.0px"><div class="c1" style="left:15px">26551</div><div class="tt" style="left:61px;width:65px"><div class="l1"><span class="n">Chanathip</span></div><div class="l2"><span class="n">VIP 1</span></div></div><div class="tb" style="left:157px;width:65px"><div class="l1">0959962718</div><div class="l2"><span class="bd" style="background:#1e9fff;width:34px">真人</span></div></div><div class="tt" style="left:253px;width:55px"><div class="l1"><span class="n">0.00</span></div><div class="l2"><span class="n">0.0000</span></div></div><div class="bb" style="left:339px;width:90px"><div class="l1"><span class="bd" style="background:#1e9fff;width:82px">个人配置模式</span></div><div class="l2"><span class="bd" style="background:#ff5722;width:67px;word-spacing:1.5px;letter-spacing:.2px">0% - &gt;0%</span></div></div><div class="c1" style="left:460px">0</div><div class="tt" style="left:536px;width:70px"><div class="l1"><span class="n">V2WMJ8</span></div><div class="l2 cj"><span class="n">ร้านแฮปปี้สับ</span></div></div><div class="c1" style="left:637px">2024-10-19 20:54:32</div><div class="tt" style="left:788px;width:80px"><div class="l1"><span class="n">122.155.5.184</span></div><div class="l2 clip cj">泰国</div></div><div class="tb" style="left:899px;width:80px"><div class="l1" style="color:#d42a2a">10-19 21:01:30</div><div class="l2"><span class="bd" style="background:#f00808;width:34px">离线</span></div></div><div class="ops"><span class="bt" style="left:0px;top:0;width:34px;background:#f00808">禁用</span><span class="bt" style="left:44px;top:0;width:70px;background:#009688">银行卡信息</span><span class="bt" style="left:124px;top:0;width:58px;background:#ff5722">地址信息</span><span class="bt" style="left:192px;top:0;width:38px;background:#009688">编 辑</span><span class="bt" style="left:240px;top:0;width:46px;background:#009688">加扣款</span><span class="bt" style="left:296px;top:0;width:58px;background:#009688">赠送彩金</span><span class="bt" style="left:364px;top:0;width:70px;background:#f00808">刷新二维码</span><span class="bt" style="left:444px;top:0;width:58px;background:#ff5722">发送短信</span><span class="bt" style="left:512px;top:0;width:37px;background:#f00808">删 除</span><span class="bt" style="left:559px;top:0;width:58px;background:#0a7f12">设为假人</span><span class="bt" style="left:0px;top:23px;width:58px;background:#ff5722">暗扣设置</span><span class="bt" style="left:68px;top:23px;width:58px;background:#ff5722">查看团队</span><span class="bt" style="left:136px;top:23px;width:38px;background:#1e9fff">账 变</span></div></div><div class="row" style="top:1191.5px"><div class="c1" style="left:15px">26550</div><div class="tt" style="left:61px;width:65px"><div class="l1"><span class="n"></span></div><div class="l2"><span class="n">VIP 1</span></div></div><div class="tb" style="left:157px;width:65px"><div class="l1">0959348560</div><div class="l2"><span class="bd" style="background:#1e9fff;width:34px">真人</span></div></div><div class="tt" style="left:253px;width:55px"><div class="l1"><span class="n"></span></div><div class="l2"><span class="n">0.0000</span></div></div><div class="bb" style="left:339px;width:90px"><div class="l1"><span class="bd" style="background:#1e9fff;width:82px">个人配置模式</span></div><div class="l2"><span class="bd" style="background:#ff5722;width:67px;word-spacing:1.5px;letter-spacing:.2px">0% - &gt;0%</span></div></div><div class="c1" style="left:460px"></div><div class="tt" style="left:536px;width:70px"><div class="l1"><span class="n"></span></div><div class="l2"><span class="n"></span></div></div><div class="c1" style="left:637px"></div><div class="tt" style="left:788px;width:80px"><div class="l1"><span class="n"></span></div><div class="l2 clip cj"></div></div><div class="tb" style="left:899px;width:80px"><div class="l1" style="color:#d42a2a">10-19 21:02:07</div><div class="l2"><span class="bd" style="background:#f00808;width:34px">离线</span></div></div><div class="ops"><span class="bt" style="left:0px;top:0;width:34px;background:#f00808">禁用</span><span class="bt" style="left:44px;top:0;width:70px;background:#009688">银行卡信息</span><span class="bt" style="left:124px;top:0;width:58px;background:#ff5722">地址信息</span><span class="bt" style="left:192px;top:0;width:38px;background:#009688">编 辑</span><span class="bt" style="left:240px;top:0;width:46px;background:#009688">加扣款</span><span class="bt" style="left:296px;top:0;width:58px;background:#009688">赠送彩金</span><span class="bt" style="left:364px;top:0;width:70px;background:#f00808">刷新二维码</span><span class="bt" style="left:444px;top:0;width:58px;background:#ff5722">发送短信</span><span class="bt" style="left:512px;top:0;width:37px;background:#f00808">删 除</span><span class="bt" style="left:559px;top:0;width:58px;background:#0a7f12">设为假人</span><span class="bt" style="left:0px;top:23px;width:58px;background:#ff5722">暗扣设置</span><span class="bt" style="left:68px;top:23px;width:58px;background:#ff5722">查看团队</span><span class="bt" style="left:136px;top:23px;width:38px;background:#1e9fff">账 变</span></div></div>
<div id="tbl-r"></div>
<svg class="abs" style="left:0;top:0;pointer-events:none" width="1922" height="1210" viewBox="0 0 1922 1210"><circle cx="961.6" cy="605" r="139.5" fill="none" stroke="#e8070f" stroke-width="5"/><text x="961.6" y="501" transform="rotate(-102 961.6 605)" text-anchor="middle" font-size="26" font-weight="bold" font-style="italic" fill="#e8070f" font-family="Liberation Sans">w</text><text x="961.6" y="501" transform="rotate(-86 961.6 605)" text-anchor="middle" font-size="26" font-weight="bold" font-style="italic" fill="#e8070f" font-family="Liberation Sans">w</text><text x="961.6" y="501" transform="rotate(-69.5 961.6 605)" text-anchor="middle" font-size="26" font-weight="bold" font-style="italic" fill="#e8070f" font-family="Liberation Sans">w</text><text x="961.6" y="501" transform="rotate(-55 961.6 605)" text-anchor="middle" font-size="26" font-weight="bold" font-style="italic" fill="#e8070f" font-family="Liberation Sans">.</text><text x="961.6" y="501" transform="rotate(-37 961.6 605)" text-anchor="middle" font-size="26" font-weight="bold" font-style="italic" fill="#e8070f" font-family="Liberation Sans">5</text><text x="961.6" y="501" transform="rotate(-23 961.6 605)" text-anchor="middle" font-size="26" font-weight="bold" font-style="italic" fill="#e8070f" font-family="Liberation Sans">1</text><text x="961.6" y="501" transform="rotate(-6 961.6 605)" text-anchor="middle" font-size="26" font-weight="bold" font-style="italic" fill="#e8070f" font-family="Liberation Sans">5</text><text x="961.6" y="501" transform="rotate(10 961.6 605)" text-anchor="middle" font-size="26" font-weight="bold" font-style="italic" fill="#e8070f" font-family="Liberation Sans">y</text><text x="961.6" y="501" transform="rotate(26 961.6 605)" text-anchor="middle" font-size="26" font-weight="bold" font-style="italic" fill="#e8070f" font-family="Liberation Sans">m</text><text x="961.6" y="501" transform="rotate(40 961.6 605)" text-anchor="middle" font-size="26" font-weight="bold" font-style="italic" fill="#e8070f" font-family="Liberation Sans">.</text><text x="961.6" y="501" transform="rotate(59 961.6 605)" text-anchor="middle" font-size="26" font-weight="bold" font-style="italic" fill="#e8070f" font-family="Liberation Sans">c</text><text x="961.6" y="501" transform="rotate(75 961.6 605)" text-anchor="middle" font-size="26" font-weight="bold" font-style="italic" fill="#e8070f" font-family="Liberation Sans">o</text><text x="961.6" y="501" transform="rotate(89.5 961.6 605)" text-anchor="middle" font-size="26" font-weight="bold" font-style="italic" fill="#e8070f" font-family="Liberation Sans">m</text><text x="961.6" y="736" transform="rotate(27.7 961.6 605)" text-anchor="middle" font-size="14" font-style="italic" fill="#e8070f" font-family="Liberation Sans">5</text><text x="961.6" y="736" transform="rotate(21.0 961.6 605)" text-anchor="middle" font-size="14" font-style="italic" fill="#e8070f" font-family="Liberation Sans">1</text><text x="961.6" y="736" transform="rotate(14.299999999999999 961.6 605)" text-anchor="middle" font-size="14" font-style="italic" fill="#e8070f" font-family="Liberation Sans">5</text><text x="961.6" y="736" transform="rotate(7.599999999999998 961.6 605)" text-anchor="middle" font-size="14" font-style="italic" fill="#e8070f" font-family="Liberation Sans">y</text><text x="961.6" y="736" transform="rotate(0.8999999999999986 961.6 605)" text-anchor="middle" font-size="14" font-style="italic" fill="#e8070f" font-family="Liberation Sans">m</text><text x="961.6" y="736" transform="rotate(-5.800000000000001 961.6 605)" text-anchor="middle" font-size="14" font-style="italic" fill="#e8070f" font-family="Liberation Sans">.</text><text x="961.6" y="736" transform="rotate(-12.500000000000004 961.6 605)" text-anchor="middle" font-size="14" font-style="italic" fill="#e8070f" font-family="Liberation Sans">c</text><text x="961.6" y="736" transform="rotate(-19.2 961.6 605)" text-anchor="middle" font-size="14" font-style="italic" fill="#e8070f" font-family="Liberation Sans">o</text><text x="961.6" y="736" transform="rotate(-25.900000000000002 961.6 605)" text-anchor="middle" font-size="14" font-style="italic" fill="#e8070f" font-family="Liberation Sans">m</text><text x="888" y="618.5" font-size="38" fill="#e8070f" stroke="#e8070f" stroke-width="1.1" font-family="Liberation Sans" textLength="62" lengthAdjust="spacingAndGlyphs">515</text><g transform="translate(958 619) skewX(-12)"><text x="0" y="0" font-size="36" fill="#e8070f" stroke="#e8070f" stroke-width="0.7" font-family="Liberation Serif" textLength="76" lengthAdjust="spacingAndGlyphs">源码</text></g><text x="887" y="686" font-size="27" font-weight="bold" fill="#e8070f" font-family="Liberation Sans" textLength="151" lengthAdjust="spacingAndGlyphs">515ym. com</text></svg>
</body></html>
